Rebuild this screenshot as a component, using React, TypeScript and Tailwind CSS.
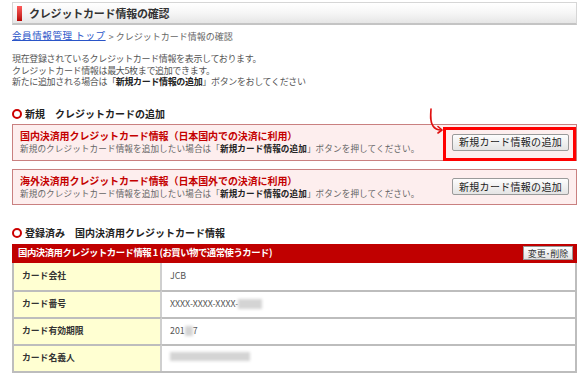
import React from "react";

const jp = { fontFamily: '"Noto Sans CJK JP", "Noto Sans", sans-serif' };

function Ring() {
  return <span className="inline-block w-[10px] h-[10px] rounded-full border-[2.5px] border-[#cc0000] bg-white mr-[3px] shrink-0" />;
}

function Btn({ children }: { children: React.ReactNode }) {
  return (
    <div className="w-[117px] h-[17px] flex items-center justify-center border border-[#9a9a9a] rounded-[2px] bg-gradient-to-b from-[#fdfdfd] to-[#e4e4e4] text-[10px] text-[#222] tracking-[0.3px] leading-none">
      {children}
    </div>
  );
}

function Blur({ w, h = 10 }: { w: number; h?: number }) {
  return <span className="inline-block bg-[#d4d4d4] blur-[1.5px] align-middle" style={{ width: w, height: h }} />;
}

export default function App() {
  return (
    <div className="w-[580px] h-[386px] bg-white pl-[12px] pr-[3px] pt-[2px] text-[#444] overflow-hidden" style={jp}>
      {/* header */}
      <div className="h-[23px] flex items-center border border-[#d6d6d6] border-b-2 border-b-[#c4c4c4] bg-gradient-to-b from-[#ffffff] via-[#f6f6f6] to-[#e6e6e6]">
        <span className="ml-[4px] w-[5px] h-[15px] bg-gradient-to-b from-[#ff5a5a] to-[#b80000]" />
        <span className="ml-[7px] text-[11px] font-bold text-[#333] leading-none tracking-[-0.2px]">クレジットカード情報の確認</span>
      </div>

      {/* breadcrumb */}
      <div className="mt-[4px] h-[14px] flex items-center text-[9px] leading-none">
        <span className="text-[#2a55c8] underline text-[9.5px] tracking-[0.6px]">会員情報管理 トップ</span>
        <span className="text-[#666] ml-[3px] tracking-[0px]">&gt; クレジットカード情報の確認</span>
      </div>

      {/* paragraph */}
      <div className="mt-[10px] text-[9px] leading-[11.5px] text-[#555] tracking-[-0.35px]">
        <div>現在登録されているクレジットカード情報を表示しております。</div>
        <div>クレジットカード情報は最大5枚まで追加できます。</div>
        <div>
          新たに追加される場合は「<b className="text-[#222]">新規カード情報の追加</b>」ボタンをおしてください
        </div>
      </div>

      {/* section 1 */}
      <div className="mt-[19px] h-[14px] flex items-center text-[10px] font-bold text-[#222] leading-none">
        <Ring />
        <span>新規　クレジットカードの追加</span>
      </div>

      <div className="relative mt-[3px] h-[37px] border border-[#c98080] bg-[#fdeeee] flex items-center pl-[7px] pr-[7px]">
        <div className="flex-1">
          <div className="text-[10px] font-bold text-[#c40000] leading-[13px] tracking-[-0.1px]">国内決済用クレジットカード情報（日本国内での決済に利用）</div>
          <div className="text-[8.6px] text-[#666] leading-[13px] tracking-[0.1px]">
            新規のクレジットカード情報を追加したい場合は「<b className="text-[#222]">新規カード情報の追加</b>」ボタンを押してください。
          </div>
        </div>
        <Btn>新規カード情報の追加</Btn>
        <div className="absolute left-[430px] top-[2px] w-[133px] h-[34px] border-[3px] border-[#ff0000]" />
        <svg className="absolute left-[415px] top-[-17px]" width="16" height="26" viewBox="0 0 16 26" fill="none">
          <path d="M3 1 C2.5 8 2 14 5 18 C7 21 10 22 13 22" stroke="#e01010" strokeWidth="1.6" strokeLinecap="round" />
          <path d="M10 18.5 L14 22 L10 25" stroke="#e01010" strokeWidth="1.6" strokeLinecap="round" strokeLinejoin="round" />
        </svg>
      </div>

      <div className="mt-[8px] h-[36px] border border-[#c98080] bg-[#fdeeee] flex items-center pl-[7px] pr-[7px]">
        <div className="flex-1">
          <div className="text-[10px] font-bold text-[#c40000] leading-[13px] tracking-[-0.1px]">海外決済用クレジットカード情報（日本国外での決済に利用）</div>
          <div className="text-[8.6px] text-[#666] leading-[13px] tracking-[0.1px]">
            新規のクレジットカード情報を追加したい場合は「<b className="text-[#222]">新規カード情報の追加</b>」ボタンを押してください。
          </div>
        </div>
        <Btn>新規カード情報の追加</Btn>
      </div>

      {/* section 2 */}
      <div className="mt-[21px] h-[14px] flex items-center text-[10px] font-bold text-[#222] leading-none">
        <Ring />
        <span>登録済み　国内決済用クレジットカード情報</span>
      </div>

      <div className="mt-[4px] h-[19px] bg-[#c00000] flex items-center pl-[6px] pr-[4px]">
        <span className="flex-1 text-[9.4px] font-bold text-white leading-none tracking-[-0.5px]">国内決済用クレジットカード情報 1 (お買い物で通常使うカード)</span>
        <div className="w-[50px] h-[14px] bg-gradient-to-b from-[#ffffff] to-[#e2e2e2] border border-[#999] flex items-center justify-center text-[9px] text-[#333] leading-none">変更･削除</div>
      </div>

      <div className="border-x-2 border-b-2 border-[#bdbdbd] grid grid-cols-[148px_1fr] text-[8.8px] leading-none">
        {[
          ["カード会社", <span>JCB</span>],
          ["カード番号", <span className="flex items-center">XXXX-XXXX-XXXX-<Blur w={24} /></span>],
          ["カード有効期限", <span className="flex items-center">201<Blur w={8} />7</span>],
          ["カード名義人", <span className="flex items-center -mt-[4px]"><Blur w={80} h={9} /></span>],
        ].map(([label, val], i) => (
          <React.Fragment key={i}>
            <div className={`h-[27px] flex items-center pl-[8px] bg-[#ffffd2] font-bold text-[#333] border-r-2 border-[#cfcfcf] ${i > 0 ? "border-t-2 border-t-[#bdbdbd]" : ""}`}>
              {label as string}
            </div>
            <div className={`h-[27px] flex items-center pl-[8px] bg-white text-[#555] ${i > 0 ? "border-t-2 border-t-[#bdbdbd]" : ""}`}>
              {val}
            </div>
          </React.Fragment>
        ))}
      </div>
    </div>
  );
}
